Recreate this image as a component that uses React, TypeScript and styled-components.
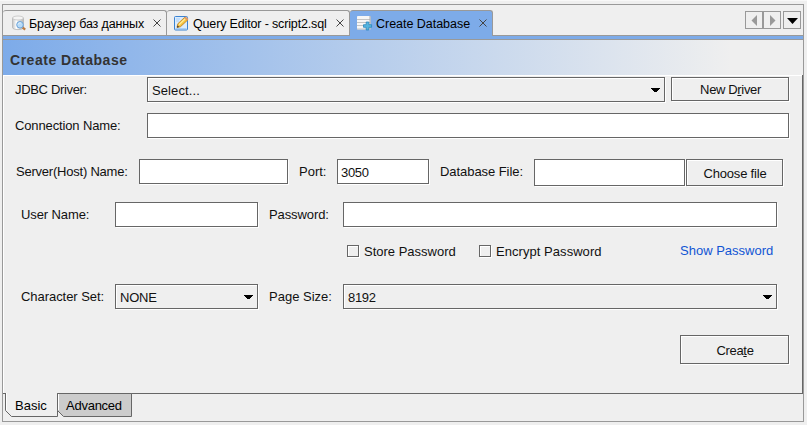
import React from "react";
import styled, { createGlobalStyle } from "styled-components";

const Global = createGlobalStyle`
  * { box-sizing: border-box; }
  body {
    margin: 0;
    background: #efefef;
    font: 13px/15px "Liberation Sans", Arial, sans-serif;
    color: #111;
    overflow: hidden;
  }
`;

const Page = styled.div`
  width: 807px;
  height: 425px;
  border-top: 1px solid #f8f8f8;
  padding: 3px 3px 3px 2px;
`;

const Frame = styled.div`
  width: 802px;
  height: 418px;
  border: 1px solid #999;
  display: flex;
  flex-direction: column;
`;

const TabStrip = styled.div`
  height: 31px;
  flex: none;
  display: flex;
  align-items: flex-start;
  padding-top: 5px;
  border-bottom: 1px solid #999;
`;

const Tab = styled.div<{ $w: number; $pad: number; $active?: boolean; $ls?: number }>`
  width: ${(p) => p.$w}px;
  height: ${(p) => (p.$active ? 26 : 25)}px;
  display: flex;
  align-items: flex-start;
  padding: 4px 0 0 ${(p) => p.$pad}px;
  border-top: 1px solid #999;
  border-right: 1px solid #999;
  border-radius: 3px 3px 0 0;
  background: ${(p) => (p.$active ? "#7dabe9" : "#efefef")};
  color: #000;
  font-size: 12.5px;
  white-space: nowrap;
  letter-spacing: ${(p) => p.$ls ?? 0}px;
  svg { flex: none; }
`;

const TabLabel = styled.span<{ $gap: number }>`
  flex: 1;
  margin-left: ${(p) => p.$gap}px;
  padding-top: 2px;
`;

const CloseIcon = styled.svg`
  width: 8px;
  height: 8px;
  margin: 4px 5px 0 0;
`;

const Nav = styled.div`
  margin: 1px 2px 0 auto;
  display: flex;
`;

const NavButton = styled.div<{ $gap?: number }>`
  width: 18px;
  height: 18px;
  margin-left: ${(p) => p.$gap ?? 0}px;
  border: 1px solid #999;
  svg { display: block; }
`;

const BlueBar = styled.div`
  height: 4px;
  flex: none;
  background: #7dabe9;
  border-bottom: 1px solid #999;
`;

const Header = styled.div`
  height: 35px;
  flex: none;
  padding: 12px 0 0 7px;
  font: bold 14px/17px "Liberation Sans", Arial, sans-serif;
  letter-spacing: 0.52px;
  color: #333;
  background: linear-gradient(to right, #7dabe9, #efefef 91%);
`;

const Form = styled.div`
  height: 319px;
  flex: none;
  border-right: 1px solid #666;
  border-bottom: 1px solid #666;
  box-shadow: inset 1px 1px 0 #fff;
  padding-top: 2px;
`;

const Row = styled.div<{ $h: number; $x: number }>`
  display: flex;
  align-items: flex-start;
  height: ${(p) => p.$h}px;
  padding-left: ${(p) => p.$x}px;
`;

const Label = styled.label<{ $w: number; $ls?: number; $ml?: number }>`
  flex: none;
  width: ${(p) => p.$w}px;
  margin-left: ${(p) => p.$ml ?? 0}px;
  padding-top: 5px;
  white-space: nowrap;
  letter-spacing: ${(p) => p.$ls ?? 0}px;
`;

const Field = styled.div<{ $w: number; $h?: number; $ls?: number }>`
  flex: none;
  display: flex;
  align-items: center;
  width: ${(p) => p.$w}px;
  height: ${(p) => p.$h ?? 25}px;
  padding: 2px 4px 0 3px;
  border: 1px solid #666;
  background: #fff;
  box-shadow: 1px 1px 0 #fff;
  letter-spacing: ${(p) => p.$ls ?? 0}px;
`;

const Select = styled(Field)`
  justify-content: space-between;
  padding-left: 4px;
  background: #efefef;
  box-shadow: 1px 1px 0 #fff, inset 1px 1px 0 #fff;
`;

const Button = styled.div<{ $w: number; $h: number; $ml?: number; $ls?: number }>`
  flex: none;
  width: ${(p) => p.$w}px;
  height: ${(p) => p.$h}px;
  margin-left: ${(p) => p.$ml ?? 0}px;
  display: flex;
  align-items: center;
  justify-content: center;
  padding: 1px 0 0 1px;
  border: 1px solid #666;
  box-shadow: 1px 1px 0 #fff, inset 1px 1px 0 #fff;
  letter-spacing: ${(p) => p.$ls ?? 0}px;
  white-space: pre;
`;

const Mnemonic = styled.span`
  text-decoration: underline;
  text-underline-offset: 1px;
`;

const Check = styled.div`
  flex: none;
  width: 12px;
  height: 12px;
  border: 1px solid #666;
  box-shadow: 1px 1px 0 #fff, inset 1px 1px 0 #fff;
`;

const CheckLabel = styled.span<{ $w: number; $ls?: number }>`
  flex: none;
  width: ${(p) => p.$w}px;
  margin: -1px 0 0 5px;
  white-space: nowrap;
  letter-spacing: ${(p) => p.$ls ?? 0}px;
`;

const Link = styled.a`
  color: #1155d4;
  margin-top: -2px;
  white-space: nowrap;
`;

const BottomTabs = styled.div`
  display: flex;
  margin: -1px 0 0 2px;
`;

const BottomTab = styled.div<{ $w: number; $active?: boolean; $ls?: number }>`
  position: relative;
  isolation: isolate;
  width: ${(p) => p.$w}px;
  height: 24px;
  padding: 5px 0 0 ${(p) => (p.$active ? 10 : 9)}px;
  color: #000;
  letter-spacing: ${(p) => p.$ls ?? 0}px;
  svg { position: absolute; left: 0; top: 0; z-index: -1; }
`;

const ComboArrow = () => (
  <svg width="9" height="5" viewBox="0 0 9 5" shapeRendering="crispEdges">
    <path d="M0 0H9V1H8V2H7V3H6V4H3V3H2V2H1V1H0Z" fill="#000" />
  </svg>
);

const Close = () => (
  <CloseIcon viewBox="0 0 8 8">
    <path d="M.5.5 7.5 7.5M7.5.5.5 7.5" stroke="#444" strokeWidth="1" />
  </CloseIcon>
);

const BrowserIcon = () => (
  <svg width="16" height="16" viewBox="0 0 16 16">
    <defs>
      <linearGradient id="cyl">
        <stop offset="0" stopColor="#c4c4c4" />
        <stop offset=".35" stopColor="#fff" />
        <stop offset="1" stopColor="#b5b5b5" />
      </linearGradient>
    </defs>
    <path d="M1.5 3v9.5c0 2.8 11 2.8 11 0V3Z" fill="url(#cyl)" stroke="#b5b5b5" strokeWidth=".8" />
    <ellipse cx="7" cy="3" rx="5.5" ry="2" fill="#f4f4f4" stroke="#c2c2c2" strokeWidth=".8" />
    <path d="m11.5 12.3 2.7 2.3" stroke="#bd7b42" strokeWidth="2.2" />
    <circle cx="9" cy="9.8" r="3.3" fill="#b9dbf7" stroke="#6da3d8" />
    <path d="M7.2 9.3c.4-1.2 1.4-1.6 2.5-1.4" fill="none" stroke="#e9f6ff" />
  </svg>
);

const EditIcon = () => (
  <svg width="16" height="16" viewBox="0 0 16 16">
    <rect x="1.5" y="1.5" width="13" height="13.5" rx="1" fill="#dcecfc" stroke="#3b83d2" />
    <path d="M2.5 13.5h11M3 4h4M3 6h3" stroke="#a8cff8" />
    <path d="m4 12.5.8-3.7L12 2l3 2.7L7.5 11.7Z" fill="#f5c33d" stroke="#b9791c" strokeWidth=".8" />
    <path d="m6 9.7 7-6.7" stroke="#ffec9a" strokeWidth="1.2" />
    <path d="m11 2.8 1.5-1.4 3 2.7-1.4 1.4Z" fill="#e29a6a" />
    <path d="m4 12.5.5-2 1.7 1.4Z" fill="#333" />
  </svg>
);

const CreateIcon = () => (
  <svg width="16" height="16" viewBox="0 0 16 16">
    <rect x="0" y="1" width="13.5" height="13.5" rx=".8" fill="#f6f6f6" />
    <path d="M0 4.5h13.5M0 7.5h13.5M0 10.5h13.5M0 14h13.5" stroke="#c4c4c4" />
    <path d="M13 1v13" stroke="#aaa" />
    <path d="M9.2 7h2.6v2.7h2.8v2.6h-2.8V15H9.2v-2.7H6.5V9.7h2.7Z" fill="#55b5df" stroke="#2987bd" strokeWidth=".8" />
  </svg>
);

export default function App() {
  return (
    <>
      <Global />
      <Page>
        <Frame>
          <TabStrip>
            <Tab $w={164} $pad={8} $ls={-0.13}>
              <BrowserIcon />
              <TabLabel $gap={2}>Браузер баз данных</TabLabel>
              <Close />
            </Tab>
            <Tab $w={183} $pad={6} $ls={-0.15}>
              <EditIcon />
              <TabLabel $gap={4}>Query Editor - script2.sql</TabLabel>
              <Close />
            </Tab>
            <Tab $w={143} $pad={7} $active $ls={-0.03}>
              <CreateIcon />
              <TabLabel $gap={3}>Create Database</TabLabel>
              <Close />
            </Tab>
            <Nav>
              <NavButton>
                <svg width="16" height="16"><path d="M11 3v11L5.5 8.5Z" fill="#999" /></svg>
              </NavButton>
              <NavButton>
                <svg width="16" height="16"><path d="M6 3v11l5.5-5.5Z" fill="#999" /></svg>
              </NavButton>
              <NavButton $gap={2}>
                <svg width="16" height="16"><path d="M3 6h11L8.5 12Z" fill="#000" /></svg>
              </NavButton>
            </Nav>
          </TabStrip>
          <BlueBar />
          <Header>Create Database</Header>
          <Form>
            <Row $h={36} $x={12}>
              <Label $w={132} $ls={-0.33}>JDBC Driver:</Label>
              <Select $w={518} $ls={0.1}>Select...<ComboArrow /></Select>
              <Button $w={118} $h={24} $ml={6} $ls={-0.35}>New D<Mnemonic>r</Mnemonic>iver</Button>
            </Row>
            <Row $h={46} $x={12}>
              <Label $w={132} $ls={-0.13}>Connection Name:</Label>
              <Field $w={642} />
            </Row>
            <Row $h={43} $x={13}>
              <Label $w={123} $ls={-0.22}>Server(Host) Name:</Label>
              <Field $w={149} />
              <Label $w={38} $ml={11}>Port:</Label>
              <Field $w={92} $ls={-0.3}>3050</Field>
              <Label $w={94} $ml={11} $ls={-0.06}>Database File:</Label>
              <Field $w={151} $h={27} />
              <Button $w={97} $h={27} $ml={1} $ls={-0.2}>Choose file</Button>
            </Row>
            <Row $h={43} $x={18}>
              <Label $w={94} $ls={-0.1}>User Name:</Label>
              <Field $w={143} />
              <Label $w={74} $ml={11} $ls={-0.1}>Password:</Label>
              <Field $w={434} />
            </Row>
            <Row $h={39} $x={344}>
              <Check />
              <CheckLabel $w={115}>Store Password</CheckLabel>
              <Check />
              <CheckLabel $w={184} $ls={0.05}>Encrypt Password</CheckLabel>
              <Link>Show Password</Link>
            </Row>
            <Row $h={51} $x={18}>
              <Label $w={94} $ls={-0.05}>Character Set:</Label>
              <Select $w={143} $ls={-0.2}>NONE<ComboArrow /></Select>
              <Label $w={74} $ml={11}>Page Size:</Label>
              <Select $w={434} $ls={-0.3}>8192<ComboArrow /></Select>
            </Row>
            <Row $h={29} $x={677}>
              <Button $w={109} $h={29} $ls={-0.3}>Crea<Mnemonic>t</Mnemonic>e</Button>
            </Row>
          </Form>
          <BottomTabs>
            <BottomTab $w={52} $active>
              <svg width="53" height="24">
                <path d="M.5 0V17.5L6.5 23.5H52.5V0" fill="#efefef" stroke="#666" />
                <path d="M1.5 0V17" stroke="#fff" />
              </svg>
              Basic
            </BottomTab>
            <BottomTab $w={75} $ls={-0.25}>
              <svg width="75" height="24">
                <path d="M.5.5V17.5L6.5 23.5H74.5V.5Z" fill="#ccc" stroke="#666" />
                <path d="M1.5 1V17" stroke="#fff" />
              </svg>
              Advanced
            </BottomTab>
          </BottomTabs>
        </Frame>
      </Page>
    </>
  );
}
